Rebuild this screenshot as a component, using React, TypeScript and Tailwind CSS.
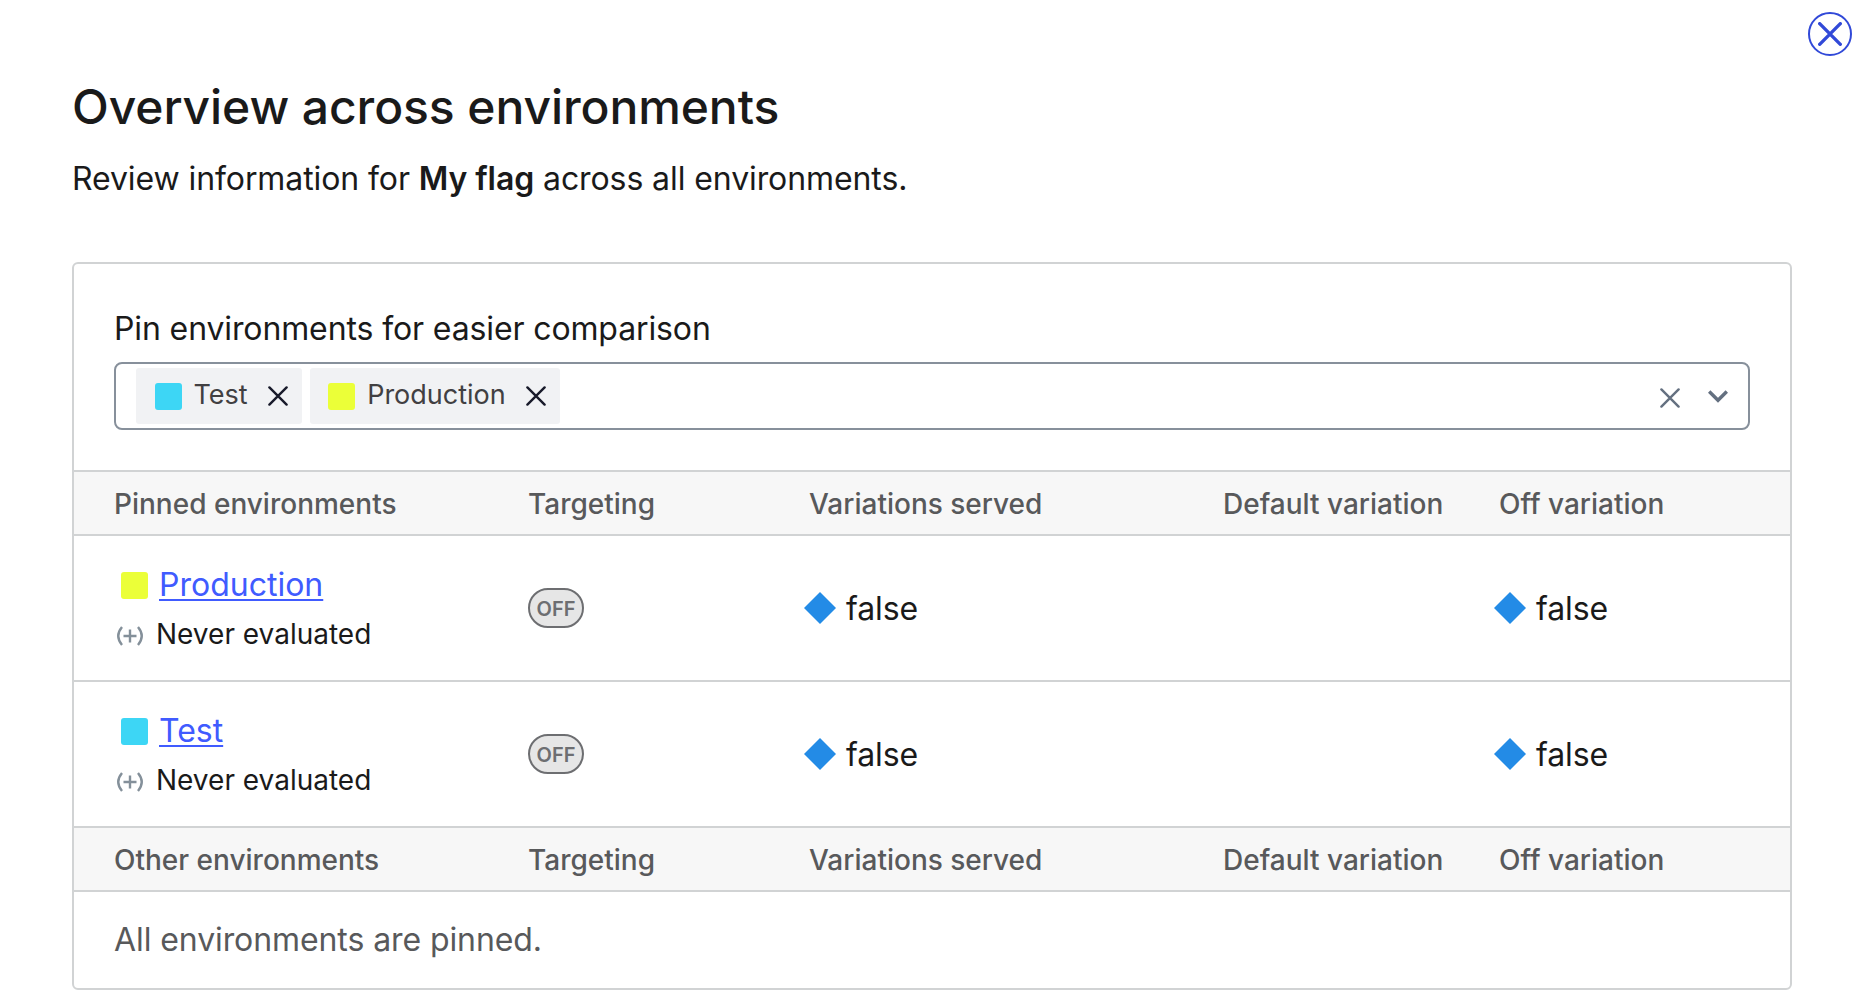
import React from "react";

const COLS = "grid grid-cols-[414px_281px_414px_276px_1fr]";

function Cross({ size, color, width }: { size: number; color: string; width: number }) {
  return (
    <svg width={size} height={size} viewBox="0 0 20 20" fill="none" stroke={color} strokeWidth={width} strokeLinecap="round">
      <path d="M1.4 1.4 18.6 18.6M18.6 1.4 1.4 18.6" />
    </svg>
  );
}

function HeadRow({ first }: { first: string }) {
  return (
    <div className={`${COLS} h-16 shrink-0 items-center border-t-2 border-[#d1d3d4] bg-[#f7f7f7] pt-px pl-10 text-[28px] font-medium text-[#58595b]`}>
      <span>{first}</span>
      <span>Targeting</span>
      <span>Variations served</span>
      <span>Default variation</span>
      <span>Off variation</span>
    </div>
  );
}

function Variation() {
  return (
    <div className="-ml-1.5 flex items-center gap-[9px] text-[32px] tracking-[-0.1px] text-[#1a1a1a]">
      <svg width="34" height="34" viewBox="0 0 34 34"><path d="M17 1 33 17 17 33 1 17Z" fill="#238be6" /></svg>
      <span className="relative top-px">false</span>
    </div>
  );
}

function EnvRow({ name, color }: { name: string; color: string }) {
  return (
    <div className={`${COLS} h-[146px] shrink-0 items-center border-t-2 border-[#d1d3d4] pl-10`}>
      <div className="pt-[3px]">
        <div className="flex items-center pl-[7px]">
          <span className="mr-[11px] size-[27px] rounded-[3px]" style={{ background: color }} />
          <a className="text-[32px] leading-[50px] text-[#405bff] underline decoration-2 underline-offset-3">{name}</a>
        </div>
        <div className="flex items-center text-[28px] leading-[49px] text-[#1a1a1a]">
          <svg className="mt-[3px] mr-3 ml-0.5" width="28" height="22" viewBox="0 0 28 22" fill="none" stroke="#84909a" strokeWidth="2.4">
            <path d="M6 2Q-1.500 11 6 20M22 2Q29.500 11 22 20M7.500 11H20.500M14 4.500V17.500" />
          </svg>
          Never evaluated
        </div>
      </div>
      <div className="flex h-10 w-14 items-center justify-center rounded-full border-2 border-[#6d6e71] bg-[#e6e6e6] pt-px text-[20px] font-semibold text-[#6d6e71]">OFF</div>
      <Variation />
      <span />
      <Variation />
    </div>
  );
}

function Chip({ name, color }: { name: string; color: string }) {
  return (
    <div className="flex h-14 items-center rounded-[3px] bg-[#f1f2f4] pr-3.5 pl-[18.500px] text-[27px] text-[#414042]">
      <span className="mr-3 size-[27px] rounded-[3px]" style={{ background: color }} />
      <span className="relative -top-px mr-5">{name}</span>
      <Cross size={20} color="#181a2a" width={2.4} />
    </div>
  );
}

export default function App() {
  return (
    <main className="relative h-[1004px] w-[1862px] overflow-hidden bg-white px-[72px] pt-[77px] font-['Inter',sans-serif] text-[#1a1a1a]">
      <button className="absolute top-3 right-2.5 flex size-11 items-center justify-center rounded-full border-2 border-[#3149d8]">
        <Cross size={24} color="#3149d8" width={2.8} />
      </button>
      <h1 className="text-[48px] leading-[60px] font-medium tracking-[-0.09px]">Overview across environments</h1>
      <p className="mt-[18px] text-[32px] leading-[48px] tracking-[-0.09px]">Review information for <b className="font-semibold">My flag</b> across all environments.</p>
      <section className="mt-[59px] flex h-[728px] w-[1720px] flex-col rounded-md border-2 border-[#d1d3d4]">
        <div className="h-[206px] shrink-0 px-10 pt-[41px]">
          <div className="text-[32px] leading-[48px] tracking-[-0.12px]">Pin environments for easier comparison</div>
          <div className="mt-[9px] flex h-[68px] items-center gap-2 rounded-lg border-2 border-[#87909b] pr-5 pl-5">
            <Chip name="Test" color="#3dd6f5" />
            <Chip name="Production" color="#ebff38" />
            <div className="ml-auto flex items-center gap-7 pt-1">
              <Cross size={20} color="#647080" width={2.4} />
              <svg className="mb-1" width="20" height="13" viewBox="0 0 20 13" fill="none" stroke="#647080" strokeWidth="3.4"><path d="m1.200 1.500 8.800 8.800 8.800-8.800" /></svg>
            </div>
          </div>
        </div>
        <HeadRow first="Pinned environments" />
        <EnvRow name="Production" color="#ebff38" />
        <EnvRow name="Test" color="#3dd6f5" />
        <HeadRow first="Other environments" />
        <div className="flex flex-1 items-center border-t-2 border-[#d1d3d4] pl-10 text-[32px] tracking-[-0.09px] text-[#58595b]">All environments are pinned.</div>
      </section>
    </main>
  );
}
